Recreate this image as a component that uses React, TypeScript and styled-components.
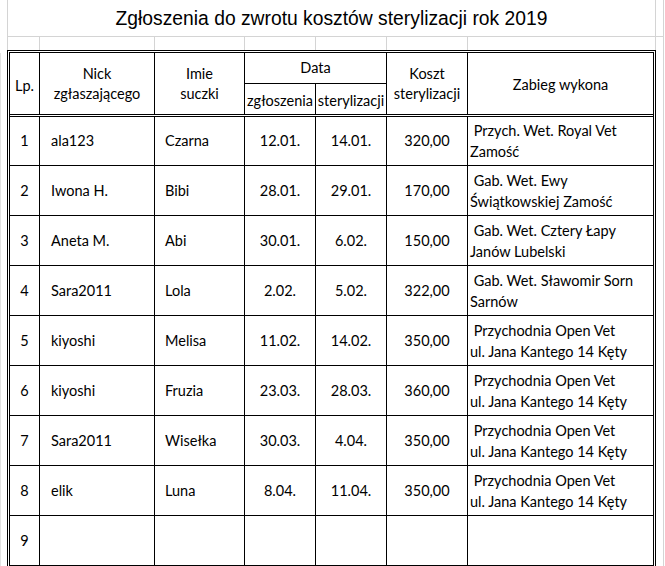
import React from 'react';
import styled, { createGlobalStyle } from 'styled-components';

const GRID = '#d4d4d4';
const COLS = '30px 115px 90px 71px 71px 81px 185px';

const GlobalStyle = createGlobalStyle`
  html, body { margin: 0; padding: 0; background: #fff; overflow: hidden; }
  body { font-family: Lato, "Open Sans", sans-serif; color: #000; }
  * { box-sizing: border-box; }
`;

const Sheet = styled.div`
  display: flex;
  width: 665px;
  height: 566px;
  overflow: hidden;
  align-items: flex-start;
`;

const LeftGutter = styled.div`
  width: 7px;
  height: 566px;
  flex: none;
  display: flex;
  flex-direction: column;
`;

const LeftEdge = styled.div`
  margin-top: 53px;
  flex: 1;
  border-left: 1px solid #e2e2e2;
`;

const Main = styled.div`
  width: 649px;
  flex: none;
  display: flex;
  flex-direction: column;
`;

const RightGutter = styled.div`
  width: 8px;
  height: 566px;
  flex: none;
  border-right: 1px solid ${GRID};
`;

const GutterCap = styled.div`
  height: 37px;
  border-bottom: 1px solid ${GRID};
`;

const TitleCell = styled.div`
  flex: none;
  height: 37px;
  border: 1px solid ${GRID};
  border-top: none;
  display: flex;
  align-items: center;
  justify-content: center;
  font-family: "Liberation Sans", Arial, sans-serif;
  font-size: 19.3px;
  padding-top: 1px;
`;

const SpacerBand = styled.div`
  flex: none;
  display: grid;
  grid-template-columns: 33px 115px 90px 71px 71px 81px 188px;
  height: 13px;
`;

const SpacerCell = styled.div`
  border-right: 1px solid ${GRID};
  &:first-child {
    border-left: 1px solid ${GRID};
  }
`;

const Table = styled.div`
  flex: none;
  width: 649px;
  border: 3px double #000;
  font-size: 14.5px;
`;

const HeaderGrid = styled.div`
  display: grid;
  grid-template-columns: ${COLS};
  grid-template-rows: 31px 30px;
  border-bottom: 3px double #000;
`;

const HeadCell = styled.div<{ $rows?: number; $cols?: number; $last?: boolean; $split?: boolean; $drop?: number }>`
  grid-row: span ${p => p.$rows ?? 1};
  grid-column: span ${p => p.$cols ?? 1};
  border-right: ${p => (p.$last ? 'none' : '1px solid #000')};
  border-bottom: ${p => (p.$split ? '1px solid #000' : 'none')};
  display: flex;
  align-items: center;
  justify-content: center;
  text-align: center;
  line-height: 20px;
  padding-top: ${p => p.$drop ?? 0}px;
`;

const Body = styled.div`
  display: flex;
  flex-direction: column;
`;

const BodyRow = styled.div`
  display: grid;
  grid-template-columns: ${COLS};
  height: 50px;
  flex: none;
  border-bottom: 1px solid #000;
  &:first-child {
    height: 49px;
  }
`;

const Cell = styled.div<{ $align?: 'left' | 'center'; $indent?: number; $last?: boolean }>`
  display: flex;
  align-items: center;
  justify-content: ${p => (p.$align === 'left' ? 'flex-start' : 'center')};
  padding-left: ${p => p.$indent ?? 0}px;
  border-right: ${p => (p.$last ? 'none' : '1px solid #000')};
  line-height: 20px;
  white-space: nowrap;
`;

const PlaceLines = styled.div`
  line-height: 21px;
  white-space: pre;
`;

type Row = {
  lp: string;
  nick?: string;
  dog?: string;
  reported?: string;
  sterilized?: string;
  cost?: string;
  place?: string[];
};

const VET_KETY = [' Przychodnia Open Vet', 'ul. Jana Kantego 14 Kęty'];

const rows: Row[] = [
  { lp: '1', nick: 'ala123', dog: 'Czarna', reported: '12.01.', sterilized: '14.01.', cost: '320,00', place: [' Przych. Wet. Royal Vet', 'Zamość'] },
  { lp: '2', nick: 'Iwona H.', dog: 'Bibi', reported: '28.01.', sterilized: '29.01.', cost: '170,00', place: [' Gab. Wet. Ewy', 'Świątkowskiej Zamość'] },
  { lp: '3', nick: 'Aneta M.', dog: 'Abi', reported: '30.01.', sterilized: '6.02.', cost: '150,00', place: [' Gab. Wet. Cztery Łapy', 'Janów Lubelski'] },
  { lp: '4', nick: 'Sara2011', dog: 'Lola', reported: '2.02.', sterilized: '5.02.', cost: '322,00', place: [' Gab. Wet. Sławomir Sorn', 'Sarnów'] },
  { lp: '5', nick: 'kiyoshi', dog: 'Melisa', reported: '11.02.', sterilized: '14.02.', cost: '350,00', place: VET_KETY },
  { lp: '6', nick: 'kiyoshi', dog: 'Fruzia', reported: '23.03.', sterilized: '28.03.', cost: '360,00', place: VET_KETY },
  { lp: '7', nick: 'Sara2011', dog: 'Wisełka', reported: '30.03.', sterilized: '4.04.', cost: '350,00', place: VET_KETY },
  { lp: '8', nick: 'elik', dog: 'Luna', reported: '8.04.', sterilized: '11.04.', cost: '350,00', place: VET_KETY },
  { lp: '9' },
];

export default function App() {
  return (
    <>
      <GlobalStyle />
      <Sheet>
        <LeftGutter>
          <LeftEdge />
        </LeftGutter>
        <Main>
          <TitleCell>Zgłoszenia do zwrotu kosztów sterylizacji rok 2019</TitleCell>
          <SpacerBand>
            {Array.from({ length: 7 }).map((_, i) => (
              <SpacerCell key={i} />
            ))}
          </SpacerBand>
          <Table>
            <HeaderGrid>
              <HeadCell $rows={2} $drop={4}>Lp.</HeadCell>
              <HeadCell $rows={2}>
                Nick
                <br />
                zgłaszającego
              </HeadCell>
              <HeadCell $rows={2}>
                Imie
                <br />
                suczki
              </HeadCell>
              <HeadCell $cols={2} $split>
                Data
              </HeadCell>
              <HeadCell $rows={2}>
                Koszt
                <br />
                sterylizacji
              </HeadCell>
              <HeadCell $rows={2} $last $drop={2}>
                Zabieg wykona
              </HeadCell>
              <HeadCell $drop={4}>zgłoszenia</HeadCell>
              <HeadCell $drop={4}>sterylizacji</HeadCell>
            </HeaderGrid>
            <Body>
              {rows.map(r => (
                <BodyRow key={r.lp}>
                  <Cell>{r.lp}</Cell>
                  <Cell $align="left" $indent={11}>{r.nick}</Cell>
                  <Cell $align="left" $indent={10}>{r.dog}</Cell>
                  <Cell>{r.reported}</Cell>
                  <Cell>{r.sterilized}</Cell>
                  <Cell>{r.cost}</Cell>
                  <Cell $align="left" $indent={2} $last>
                    {r.place && <PlaceLines>{r.place.join('\n')}</PlaceLines>}
                  </Cell>
                </BodyRow>
              ))}
            </Body>
          </Table>
        </Main>
        <RightGutter>
          <GutterCap />
        </RightGutter>
      </Sheet>
    </>
  );
}
